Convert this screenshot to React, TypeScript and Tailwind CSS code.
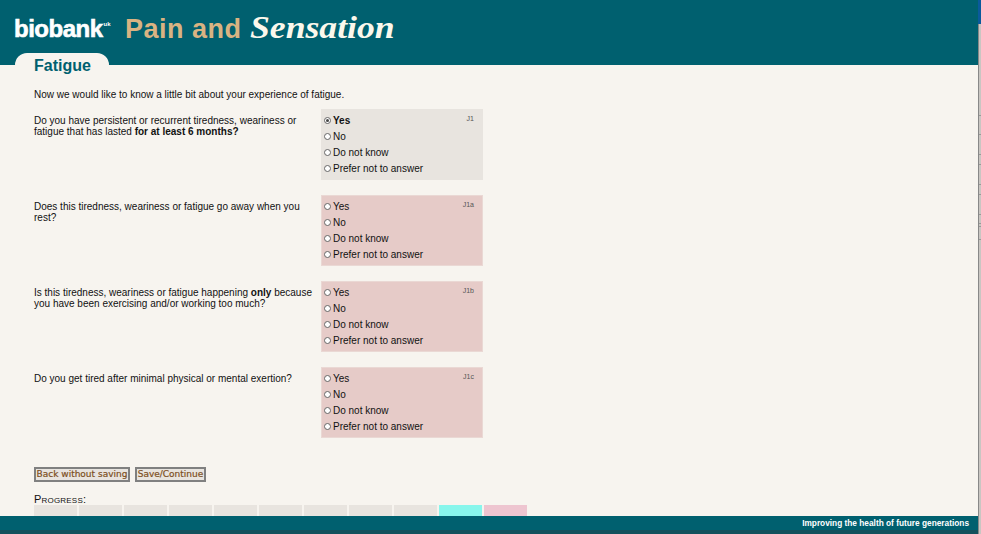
import React from 'react';

const options = ['Yes', 'No', 'Do not know', 'Prefer not to answer'];
const stripGaps = [92, 19, 20, 10, 20, 10, 20, 9, 3, 13];

interface QuestionProps {
  code: string;
  children: React.ReactNode;
  answered?: boolean;
}

function Question({ code, children, answered }: QuestionProps) {
  return (
    <div className="flex items-start">
      <p className="mr-[7px] w-[280px] pt-[6px] text-[10px] leading-[11px] text-[#111]">{children}</p>
      <div
        className={`relative h-[71px] w-[162px] ${
          answered ? 'bg-[#e8e4df] pl-[3px] pt-[3px]' : 'border border-[#ead8d4] bg-[#e6cbc8] pl-[2px] pt-[2px]'
        }`}
      >
        <span
          className={`absolute text-[7px] leading-[8px] text-[#555] ${
            answered ? 'right-[9px] top-[6px]' : 'right-[8px] top-[5px]'
          }`}
        >
          {code}
        </span>
        {options.map((option, i) => (
          <label key={option} className="flex h-[16px] items-center text-[10px] text-[#111]">
            <span className="mr-[2px] flex h-[7px] w-[7px] items-center justify-center rounded-full border border-[#666] bg-white">
              {answered && i === 0 && <span className="h-[3px] w-[3px] rounded-full bg-[#444]" />}
            </span>
            <span className={answered && i === 0 ? 'font-bold' : ''}>{option}</span>
          </label>
        ))}
      </div>
    </div>
  );
}

export default function App() {
  const progressCells = ['a', 'b', 'c', 'd', 'e', 'f', 'g', 'h', 'i'];

  return (
    <div className="flex h-[534px] w-[981px] overflow-hidden font-['Liberation_Sans',Arial,sans-serif]">
      <div className="flex w-[978px] flex-col bg-[#f7f4ef]">
        <header className="relative h-[65px] shrink-0 bg-[#00606f]">
          <div className="flex items-baseline pl-[14px] pt-[11px]">
            <span className="relative -top-[1px] flex w-[111px] items-baseline text-[24px] leading-[34px] font-bold tracking-[-0.5px] text-white [-webkit-text-stroke:0.6px_white]">
              biobank
              <span className="relative -top-[11px] ml-[1px] text-[6px] leading-[6px] tracking-normal [-webkit-text-stroke:0px]">
                uk
              </span>
            </span>
            <span className="text-[27px] leading-[34px] font-bold tracking-[0.5px] text-[#d9b382]">Pain and</span>
            <span className="ml-[8px] inline-block origin-left scale-x-[1.15] font-['Liberation_Serif',serif] text-[31px] leading-[34px] font-bold italic text-[#fbf8ec]">
              Sensation
            </span>
          </div>
          <div className="absolute bottom-0 left-[15px] h-[12px] w-[94px] rounded-t-[14px] bg-[#f7f4ef]" />
        </header>

        <main className="h-[451px] pl-[34px]">
          <h1 className="-mt-[9px] relative text-[16px] leading-[20px] font-bold text-[#00606f]">Fatigue</h1>
          <p className="mt-[13px] text-[10px] leading-[12px] text-[#111]">
            Now we would like to know a little bit about your experience of fatigue.
          </p>

          <div className="mt-[8px] flex flex-col gap-[15px]">
            <Question code="J1" answered>
              Do you have persistent or recurrent tiredness, weariness or fatigue that has lasted{' '}
              <b>for at least 6 months?</b>
            </Question>
            <Question code="J1a">Does this tiredness, weariness or fatigue go away when you rest?</Question>
            <Question code="J1b">
              Is this tiredness, weariness or fatigue happening <b>only</b> because you have been exercising and/or
              working too much?
            </Question>
            <Question code="J1c">Do you get tired after minimal physical or mental exertion?</Question>
          </div>

          <div className="mt-[29px] flex gap-[5px]">
            <button className="h-[15px] w-[96px] whitespace-nowrap border-2 border-[#808080] bg-[#e8e4df] font-['DejaVu_Sans',sans-serif] text-[9px] leading-[11px] text-[#7d4f22] [-webkit-text-stroke:0.2px_#7d4f22]">
              Back without saving
            </button>
            <button className="h-[15px] w-[71px] whitespace-nowrap border-2 border-[#808080] bg-[#e8e4df] font-['DejaVu_Sans',sans-serif] text-[9px] leading-[11px] text-[#7d4f22] [-webkit-text-stroke:0.2px_#7d4f22]">
              Save/Continue
            </button>
          </div>

          <p className="mt-[11px] text-[11px] leading-[12px] tracking-[0.2px] text-[#111] [font-variant:small-caps]">
            Progress:
          </p>
          <div className="flex gap-[2px]">
            {progressCells.map(cell => (
              <div key={cell} className="h-[11px] w-[43px] bg-[#e8e4df]" />
            ))}
            <div className="h-[11px] w-[43px] bg-[#88f6ec]" />
            <div className="h-[11px] w-[43px] bg-[#eec5d0]" />
          </div>
        </main>

        <footer className="h-[14px] shrink-0 bg-[#00606f] pr-[9px] text-right text-[8.3px] leading-[14px] font-bold text-white">
          Improving the health of future generations
        </footer>
        <div className="h-[4px] shrink-0 bg-[#15505c]" />
      </div>

      <div className="flex w-[3px] flex-col bg-[#c9c6c2]">
        <div className="h-[24px] bg-[#0a5a9c]" />
        <div className="flex-1 border-l border-[#888]">
          {stripGaps.map((gap, i) => (
            <div key={i} className="border-b border-[#999]" style={{ height: gap }} />
          ))}
        </div>
      </div>
    </div>
  );
}
